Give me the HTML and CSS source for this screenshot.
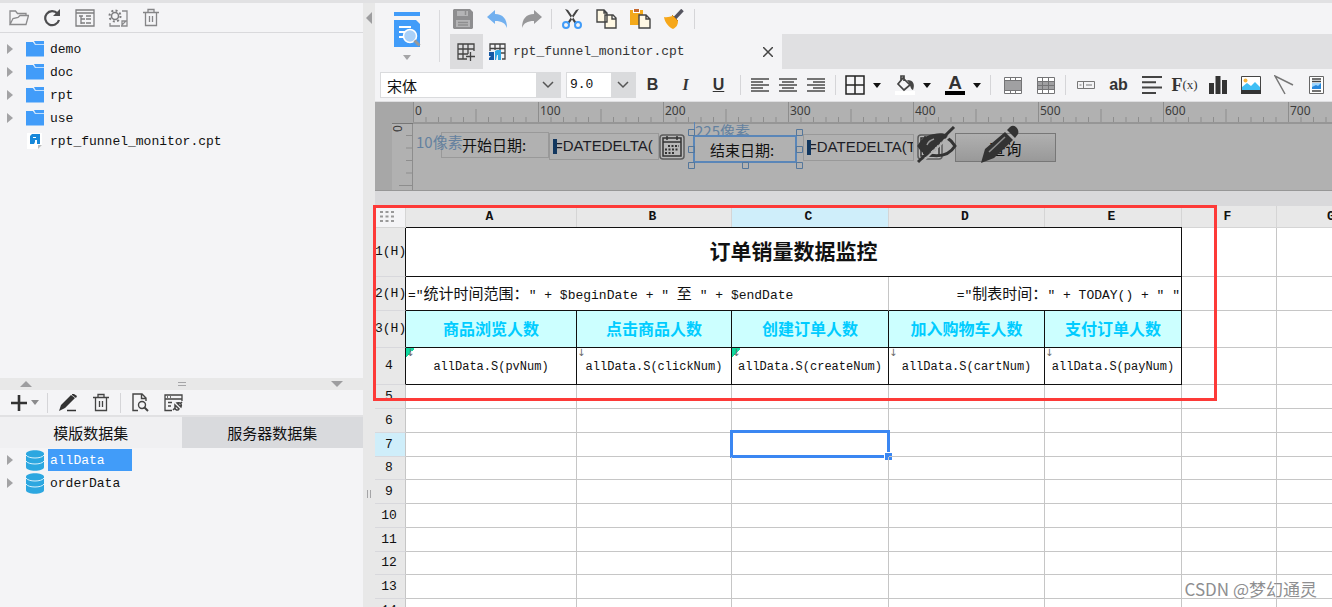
FILE: index.html
```html
<!DOCTYPE html>
<html lang="zh-CN">
<head>
<meta charset="utf-8">
<title>rpt_funnel_monitor.cpt</title>
<link rel="stylesheet" href="styles.css">
</head>
<body>
<svg class="defs" width="0" height="0" aria-hidden="true">
  <defs>
    <symbol id="folder" viewBox="0 0 18 16"><path fill="#419cf9" d="M0 1h7l2 3h9v11.500H0z"/><path fill="#419cf9" d="M8 0h10v3h-8.500z"/><path stroke="#bfdfff" fill="none" d="M7.500 1l2 2.500H18"/></symbol>
    <symbol id="db" viewBox="0 0 18 21"><path fill="#2ca7e0" d="M0 4c0-5 18-5 18 0v13c0 5-18 5-18 0z"/><path fill="none" stroke="#d8f1fc" d="M0 5c2 4 16 4 18 0M0 11c2 4 16 4 18 0"/></symbol>
    <symbol id="twist" viewBox="0 0 6 10"><path fill="#a3a3a5" d="M0 0l6 5-6 5z"/></symbol>
    <symbol id="down" viewBox="0 0 8 5"><path fill="currentColor" d="M0 0h8L4 5z"/></symbol>
    <symbol id="chev" viewBox="0 0 12 8"><path fill="none" stroke="#555" stroke-width="1.500" d="M1 1l5 5 5-5"/></symbol>
    <symbol id="trash" viewBox="0 0 18 20"><path fill="none" stroke="currentColor" stroke-width="1.300" d="M1 4.500h16M6 4V1.500h6V4M3.500 4.500v13h11v-13M7.500 8v6M10.500 8v6"/></symbol>
    <symbol id="cal" viewBox="0 0 26 26"><rect x="1" y="1" width="24" height="24" rx="3" fill="#b8b8b8" stroke="#5c5c5c" stroke-width="1.500"/><path fill="none" stroke="#333" stroke-width="1.500" d="M4 4h18v18H4zM4 8h18M8 2v4M18 2v4"/><path stroke="#333" stroke-width="2" stroke-dasharray="2 1.500" d="M9 12h11M6 15.500h14M6 19h10"/></symbol>
    <pattern id="ticks" width="125" height="22" patternUnits="userSpaceOnUse"><path stroke="#8d8d8d" fill="none" d="M.5 0v22M13 15v7M25.500 15v7M38 15v7M50.500 15v7M63 7v15M75.500 15v7M88 15v7M100.500 15v7M113 15v7"/></pattern>
  </defs>
</svg>
<div class="app">
  <aside class="side">
    <div class="bar bar--files">
      <button class="tool" aria-label="打开"><svg width="20" height="18" viewBox="0 0 20 18"><path fill="none" stroke="#8b8b8d" stroke-width="1.300" d="M1 15.500V2h5.500l2 2.500H17V7M1 15.500L4 9.500l5-1 2-2h8.500L17 15.500z"/></svg></button>
      <button class="tool" aria-label="刷新"><svg width="18" height="18" viewBox="0 0 18 18"><path fill="none" stroke="#4d4d4f" stroke-width="2.200" d="M14.500 4.500A7 7 0 1 0 16 11"/><path fill="#4d4d4f" d="M17 0v7h-7z"/></svg></button>
      <button class="tool" aria-label="结构"><svg width="20" height="18" viewBox="0 0 20 18"><path fill="none" stroke="#7d7d7f" stroke-width="1.300" d="M1 1h18v16H1zM1 4h18M4 7h4M6 7v8M6 10h4M6 14h4M11 7h5M11 10h5M11 14h5"/></svg></button>
      <button class="tool" aria-label="设置"><svg width="20" height="18" viewBox="0 0 20 18"><circle cx="7" cy="7" r="3.500" fill="none" stroke="#7d7d7f" stroke-width="1.500"/><circle cx="7" cy="7" r="5.500" fill="none" stroke="#7d7d7f" stroke-width="2" stroke-dasharray="2 2.300"/><path fill="none" stroke="#8b8b8d" stroke-width="1.300" d="M14 2h5v15h-6M2 14v3h10M14 12h4l-4 4z"/></svg></button>
      <button class="tool tool--grey" aria-label="删除"><svg width="18" height="20"><use href="#trash"/></svg></button>
    </div>
    <ul class="tree tree--files">
      <li><svg class="tw"><use href="#twist"/></svg><svg class="fo"><use href="#folder"/></svg><span>demo</span></li>
      <li><svg class="tw"><use href="#twist"/></svg><svg class="fo"><use href="#folder"/></svg><span>doc</span></li>
      <li><svg class="tw"><use href="#twist"/></svg><svg class="fo"><use href="#folder"/></svg><span>rpt</span></li>
      <li><svg class="tw"><use href="#twist"/></svg><svg class="fo"><use href="#folder"/></svg><span>use</span></li>
      <li><i class="tw"></i><svg class="fo" viewBox="0 0 18 16"><path fill="#fff" d="M1 0h15v12l-4 4H1z"/><path fill="#bbb" d="M12 12h4l-4 4z"/><path fill="#1687d9" d="M4 3l2-2h8v10h-3V7H9v2l-1 2H4z"/><path fill="#fff" d="M7 4h3v1H7z"/></svg><span>rpt_funnel_monitor.cpt</span></li>
    </ul>
    <div class="hsplit"><svg width="12" height="6" viewBox="0 0 12 6"><path fill="#9d9d9f" d="M0 6l6-6 6 6z"/></svg><svg width="8" height="4" viewBox="0 0 8 4"><path stroke="#a5a5a7" d="M0 .5h8M0 3.500h8"/></svg><svg width="12" height="6" viewBox="0 0 12 6"><path fill="#9d9d9f" d="M0 0h12L6 6z"/></svg></div>
    <section class="data">
      <div class="bar bar--data">
        <button class="tool tool--add" aria-label="新增"><svg width="18" height="18" viewBox="0 0 18 18"><path stroke="#333" stroke-width="2.600" d="M9 1v16M1 9h16"/></svg><svg class="dd"><use href="#down"/></svg></button>
        <i class="sep sep--tight"></i>
        <button class="tool" aria-label="编辑"><svg width="18" height="18" viewBox="0 0 18 18"><path fill="#333" d="M0 17l2-6L12 1l4 3L6 14zM13 0h2l3 2-1 2-4-3z"/><path stroke="#333" stroke-width="1.500" d="M8 16.500h9"/></svg></button>
        <button class="tool tool--dark" aria-label="删除"><svg width="18" height="20"><use href="#trash"/></svg></button>
        <i class="sep sep--tight"></i>
        <button class="tool" aria-label="预览"><svg width="17" height="19" viewBox="0 0 17 19"><path fill="none" stroke="#444" stroke-width="1.400" d="M6 17.500H1V1h9l4 4v3M9.500 1v4.500H14"/><circle cx="10" cy="12" r="3.500" fill="none" stroke="#444" stroke-width="1.400"/><path stroke="#444" stroke-width="2" d="M12 14l4 4"/></svg></button>
        <button class="tool" aria-label="连接"><svg width="19" height="18" viewBox="0 0 19 18"><path fill="none" stroke="#444" stroke-width="1.300" d="M8 16.500H1V1h17v6M1 5h17M3 3h1M6 3h1M4 8.500h4M4 12h3"/><path fill="none" stroke="#444" stroke-width="1.500" d="M9 16l2-2M11 11l4 4c-1 2-4 1-4-1zM13 9l4 4c1-2 0-5-4-4zM16 10l2-2"/></svg></button>
      </div>
      <div class="dtabs" role="tablist"><button role="tab" aria-selected="true" class="dtab dtab--on">模版数据集</button><button role="tab" aria-selected="false" class="dtab">服务器数据集</button></div>
      <ul class="tree tree--data">
        <li class="on"><svg class="tw"><use href="#twist"/></svg><svg class="dbi"><use href="#db"/></svg><span>allData</span></li>
        <li><svg class="tw"><use href="#twist"/></svg><svg class="dbi"><use href="#db"/></svg><span>orderData</span></li>
      </ul>
    </section>
  </aside>
  <div class="vsplit"><svg width="6" height="12" viewBox="0 0 6 12"><path fill="#9d9d9f" d="M6 0v12L0 6z"/></svg><svg width="4" height="8" viewBox="0 0 4 8"><path stroke="#a5a5a7" d="M.5 0v8M3.500 0v8"/></svg></div>
  <main class="main">
    <header class="head">
      <button class="preview" aria-label="预览"><svg width="28" height="36" viewBox="0 0 28 36"><path fill="#419cf9" d="M1 0h26v4H1zM1 8h22l4 4v23H1z"/><path stroke="#fff" stroke-width="2" d="M6 15h12M6 20h7M6 25h6"/><circle cx="17" cy="24" r="6.500" fill="#a9d0f8" stroke="#fff" stroke-width="1.500"/><path stroke="#999" stroke-width="3" d="M21.500 28.500l5 5"/></svg><svg class="dd"><use href="#down"/></svg></button>
      <i class="headsep"></i>
      <div class="headmain">
        <div class="quick">
          <button class="tool" aria-label="保存"><svg width="20" height="20" viewBox="0 0 20 20"><path fill="#8e8e90" d="M0 1l1-1h16l3 3v16l-1 1H1l-1-1z"/><path fill="#b4b4b6" d="M4 2h11v5H4zM3 11h14v7H3z"/><path stroke="#8e8e90" stroke-width="1.500" d="M12.500 2v4M5 13.500h10M5 16h10"/></svg></button>
          <button class="tool" aria-label="撤销"><svg width="21" height="18" viewBox="0 0 21 18"><path fill="#72b0ef" d="M0 7l8-7v4c8 0 12 5 12 14-2-5-5-7-12-7v3z"/></svg></button>
          <button class="tool" aria-label="重做"><svg width="21" height="18" viewBox="0 0 21 18"><path fill="#979799" d="M21 7l-8-7v4C5 4 1 9 1 18c2-5 5-7 12-7v3z"/></svg></button>
          <i class="sep sep--tight"></i>
          <button class="tool" aria-label="剪切"><svg width="20" height="20" viewBox="0 0 20 20"><path fill="#444" d="M3 0l3 1 9 13-2 1zM17 0l-3 1-9 13 2 1z"/><circle cx="4" cy="16" r="3" fill="none" stroke="#419cf9" stroke-width="2"/><circle cx="16" cy="16" r="3" fill="none" stroke="#419cf9" stroke-width="2"/></svg></button>
          <button class="tool" aria-label="复制"><svg width="21" height="20" viewBox="0 0 21 20"><path fill="#fff8e4" stroke="#444" stroke-width="1.400" d="M1 1h7l3 3v9H1zM9 6h8l3 3v10H9zM8 1v3h3M16 6v4h4"/></svg></button>
          <button class="tool" aria-label="粘贴"><svg width="21" height="20" viewBox="0 0 21 20"><path fill="#f3a91b" d="M0 1h13v15H0z"/><path fill="#fff" d="M3 0h7v4H3z"/><path fill="#c5682f" d="M4 0h5v3H4z"/><path fill="#fff8e4" stroke="#444" stroke-width="1.400" d="M9 6h7l4 4v9H9zM16 6v4h4"/></svg></button>
          <button class="tool" aria-label="格式刷"><svg width="20" height="20" viewBox="0 0 20 20"><path stroke="#555560" stroke-width="3.500" d="M18.500 1L11 9"/><path fill="#f6a71a" d="M0 8c4 1 6-1 9-1l5 5c0 3-1 6-5 8-4-2-8-6-9-12z"/><path stroke="#d08613" d="M8 6l6 6"/></svg></button>
          <i class="sep sep--tight"></i>
        </div>
        <nav class="tabs">
          <button class="newtab" aria-label="新建"><svg width="19" height="18" viewBox="0 0 19 18"><path fill="none" stroke="#444" stroke-width="1.300" d="M10 16H1V1h16v7M1 6h16M1 11h10M6 1v15M11 1v10M9 13.500h9M13.500 9v9"/></svg></button>
          <div class="tab"><svg width="17" height="17" viewBox="0 0 17 17"><path fill="none" stroke="#444" stroke-width="1.300" d="M1 8V1h15v15h-3M1 5.500h15M6 1v6M11 1v6M11 10h5"/><path fill="#1559a5" d="M0 9h5v8H0v-2l2-2H0z"/><path fill="#31a7e4" d="M6 8l2-1h4v10H9v-5H8l-1 5H6z"/></svg><span>rpt_funnel_monitor.cpt</span><button class="close" aria-label="关闭"><svg width="10" height="10" viewBox="0 0 10 10"><path stroke="#444" stroke-width="1.500" d="M0 0l10 10M10 0L0 10"/></svg></button></div>
        </nav>
      </div>
    </header>
    <div class="format">
      <label class="pick pick--font"><select aria-label="字体"><option>宋体</option></select><svg><use href="#chev"/></svg></label>
      <label class="pick pick--size"><select aria-label="字号"><option>9.0</option></select><svg><use href="#chev"/></svg></label>
      <button class="tool b">B</button><button class="tool i">I</button><button class="tool u">U</button>
      <i class="sep"></i>
      <button class="tool tool--al" aria-label="左对齐"><svg width="18" height="15" viewBox="0 0 18 15"><path stroke="#4a4a4a" stroke-width="1.500" d="M0 1h18M0 4h12M0 7h18M0 10h12M0 13h18"/></svg></button>
      <button class="tool tool--al" aria-label="居中"><svg width="18" height="15" viewBox="0 0 18 15"><path stroke="#4a4a4a" stroke-width="1.500" d="M0 1h18M3 4h12M0 7h18M3 10h12M0 13h18"/></svg></button>
      <button class="tool tool--al" aria-label="右对齐"><svg width="18" height="15" viewBox="0 0 18 15"><path stroke="#4a4a4a" stroke-width="1.500" d="M0 1h18M6 4h12M0 7h18M6 10h12M0 13h18"/></svg></button>
      <i class="sep"></i>
      <div class="combos">
        <button class="combo" aria-label="边框"><svg width="20" height="20" viewBox="0 0 20 20"><path fill="none" stroke="#222" stroke-width="1.500" d="M1 1h18v18H1zM10 1v18M1 10h18"/></svg><svg class="dd"><use href="#down"/></svg></button>
        <button class="combo" aria-label="填充"><svg width="20" height="20" viewBox="0 0 20 20"><path fill="#fff" d="M0 16h20v4H0z"/><path fill="none" stroke="#444" stroke-width="1.700" d="M8 3l7 7-6 5-6-6zM6 6V1h3v5"/><path fill="#444" d="M12 5c7 0 8 5 6 10-3-1-2-5-6-10z"/></svg><svg class="dd"><use href="#down"/></svg></button>
        <button class="combo combo--a" aria-label="字体颜色"><b>A</b><svg class="dd"><use href="#down"/></svg></button>
      </div>
      <i class="sep"></i>
      <button class="tool" aria-label="合并"><svg width="18" height="17" viewBox="0 0 18 17"><path fill="#fff" stroke="#747476" d="M.5.500h17v16H.5z"/><path fill="#a0a0a2" d="M1 3h16v11H1z"/><path stroke="#747476" fill="none" d="M0 3.500h18M0 13.500h18M6.500 0v3M11.500 0v3M6.500 14v3M11.500 14v3"/></svg></button>
      <button class="tool" aria-label="拆分"><svg width="18" height="17" viewBox="0 0 18 17"><path fill="#fff" stroke="#747476" d="M.5.500h17v16H.5z"/><path fill="#a0a0a2" d="M1 4h16v9H1z"/><path stroke="#747476" d="M0 4.500h18M0 8.500h18M0 12.500h18M5.500 0v17M11.500 0v17"/></svg></button>
      <i class="sep sep--tight"></i>
      <button class="tool" aria-label="单元格"><svg width="18" height="8" viewBox="0 0 18 8"><path fill="none" stroke="#777" d="M.5.500h17v7H.5zM6.500 1v6M2.500 4h2M9 4h6"/></svg></button>
      <button class="tool ab">ab</button>
      <button class="tool" aria-label="富文本"><svg width="20" height="18" viewBox="0 0 20 18"><path stroke="#444" stroke-width="2" d="M0 1h20M0 6.300h14M0 11.600h20M0 17h14"/></svg></button>
      <button class="tool fx">F<small>(x)</small></button>
      <button class="tool" aria-label="图表"><svg width="18" height="18" viewBox="0 0 18 18"><path fill="#333" d="M0 7h5v11H0zM6.500 0h5v18h-5zM13 4h5v14h-5z"/></svg></button>
      <button class="tool" aria-label="图片"><svg width="20" height="18" viewBox="0 0 20 18"><path fill="#fff" stroke="#444" d="M.5.500h19v17H.5z"/><circle cx="4.500" cy="4.500" r="2" fill="#f8b53c"/><path fill="#40bff5" d="M1 14V11l5-4 4 3 4-4 5 5v3z"/><path fill="#333" d="M0 14h20v4H0z"/></svg></button>
      <button class="tool" aria-label="斜线"><svg width="20" height="20" viewBox="0 0 20 20"><path fill="none" stroke="#777" stroke-width="1.500" d="M19 10L1 1l10 18"/></svg></button>
      <button class="tool" aria-label="子报表"><svg width="15" height="18" viewBox="0 0 15 18"><path fill="#fff" stroke="#666" d="M.5.500h14v17H.5z"/><path stroke="#444" stroke-width="1.300" d="M3 3h9M3 5.500h9M3 15h9"/><path fill="#2788dd" d="M3 7h9v6H3z"/><path fill="#9fd6ff" d="M3 7h9l-3 3-2-1-4 2z"/></svg></button>
    </div>
    <section class="designer">
      <svg class="hruler" width="100%" height="22"><rect width="100%" height="22" fill="url(#ticks)"/><g class="num"><text x="2" y="13">0</text><text x="127" y="13">100</text><text x="252" y="13">200</text><text x="377" y="13">300</text><text x="502" y="13">400</text><text x="627" y="13">500</text><text x="752" y="13">600</text><text x="877" y="13">700</text></g></svg>
      <svg class="vruler" width="21" height="66"><path stroke="#8d8d8d" d="M14 11.500h7M14 24h7M14 36.500h7M14 49h7M7 61.500h14"/><text class="num" transform="translate(10 8) rotate(-90)">0</text></svg>
      <div class="canvas">
        <div class="w w-lab"><span>开始日期:</span></div>
        <span class="w px px-1">10像素</span>
        <div class="w w-in w-in1"><i></i><span>=DATEDELTA(</span></div>
        <svg class="w cal1" width="26" height="26"><use href="#cal"/></svg>
        <span class="w px px-2">225像素</span>
        <div class="w w-sel"><span>结束日期:</span></div>
        <svg class="w hand" width="116" height="42" viewBox="0 0 116 42"><path fill="none" stroke="#55779b" d="M.5 1.500h6v6h-6zM108.500 1.500h6v6h-6zM.5 18.500h6v6h-6zM108.500 18.500h6v6h-6zM.5 34.500h6v6h-6zM54.500 34.500h6v6h-6zM108.500 34.500h6v6h-6z"/></svg>
        <div class="w w-in w-in2"><i></i><span>=DATEDELTA(T</span></div>
        <svg class="w cal2" width="26" height="26"><use href="#cal"/></svg>
        <button class="w w-btn">查询</button>
        <svg class="w eye" width="40" height="38" viewBox="0 0 40 38"><path fill="none" stroke="#333" stroke-width="3" d="M2 20C9 6 30 6 38 20 30 33 9 33 2 20z"/><path fill="#333" d="M3 20C8 7 24 5 31 9L10 29C6 27 4 24 3 20z"/><path fill="none" stroke="#999" stroke-width="1.500" d="M10 19c1-3 4-5 7-6"/><path stroke="#b1b1b1" stroke-width="2" d="M4 37L39 4"/><path stroke="#333" stroke-width="3" d="M1 36L37 1"/></svg>
        <svg class="w pen" width="38" height="38" viewBox="0 0 38 38"><path fill="#333" d="M0 38l4-14L24 7l8 8-19 18zM26 5l3-3c4-4 10 2 8 7l-3 4z"/><path stroke="#8f8f8f" stroke-width="1.500" d="M8 27L24 12"/></svg>
      </div>
    </section>
    <section class="sheet">
      <div class="clip">
      <table>
        <colgroup><col class="c0"><col class="cA"><col class="cB"><col class="cC"><col class="cD"><col class="cE"><col class="cF"><col class="cG"></colgroup>
        <thead><tr><th class="corner"><svg width="14" height="11" viewBox="0 0 14 11"><path stroke="#999" stroke-width="2" stroke-dasharray="3 2.500" d="M0 1h14M0 5.500h14M0 10h14"/></svg></th><th>A</th><th>B</th><th class="hot">C</th><th>D</th><th>E</th><th>F</th><th>G</th></tr></thead>
        <tbody>
          <tr class="r1"><th>1(H)</th><td colspan="5" class="k title">订单销量数据监控</td><td></td><td></td></tr>
          <tr class="r2"><th>2(H)</th><td colspan="3" class="kb expr">="<b>统计时间范围：</b>" + $beginDate + " <b>至</b> " + $endDate</td><td colspan="2" class="k expr right">="<b>制表时间：</b>" + TODAY() + " "</td><td></td><td></td></tr>
          <tr class="r3"><th>3(H)</th><td class="k hd">商品浏览人数</td><td class="k hd">点击商品人数</td><td class="k hd">创建订单人数</td><td class="k hd">加入购物车人数</td><td class="k hd">支付订单人数</td><td></td><td></td></tr>
          <tr class="r3"><th>4</th><td class="k v g">allData.S(pvNum)</td><td class="k v">allData.S(clickNum)</td><td class="k v g">allData.S(createNum)</td><td class="k v">allData.S(cartNum)</td><td class="k v">allData.S(payNum)</td><td></td><td></td></tr>
          <tr><th>5</th><td></td><td></td><td></td><td></td><td></td><td></td><td></td></tr>
          <tr><th>6</th><td></td><td></td><td></td><td></td><td></td><td></td><td></td></tr>
          <tr><th class="hot">7</th><td></td><td></td><td class="sel"><i></i></td><td></td><td></td><td></td><td></td></tr>
          <tr class="s"><th>8</th><td></td><td></td><td></td><td></td><td></td><td></td><td></td></tr>
          <tr><th>9</th><td></td><td></td><td></td><td></td><td></td><td></td><td></td></tr>
          <tr><th>10</th><td></td><td></td><td></td><td></td><td></td><td></td><td></td></tr>
          <tr><th>11</th><td></td><td></td><td></td><td></td><td></td><td></td><td></td></tr>
          <tr class="s"><th>12</th><td></td><td></td><td></td><td></td><td></td><td></td><td></td></tr>
          <tr><th>13</th><td></td><td></td><td></td><td></td><td></td><td></td><td></td></tr>
          <tr><th>14</th><td></td><td></td><td></td><td></td><td></td><td></td><td></td></tr>
        </tbody>
      </table>
      </div>
      <div class="redbox"></div>
    </section>
    <div class="mark">CSDN @梦幻通灵</div>
  </main>
</div>
</body>
</html>
```
FILE: styles.css
```css
* { box-sizing: border-box; }
body { margin: 0; font: 13px/16px "Liberation Mono", "Noto Sans CJK SC", monospace; color: #111; background: #f4f4f6; }
button { border: 0; padding: 0; margin: 0; background: none; color: inherit; font: inherit; }
ul { list-style: none; margin: 0; padding: 0; }
svg { flex: none; display: block; }
.defs { position: absolute; }
.app { display: flex; height: 100vh; border-top: 3px solid #e1e1e3; overflow: hidden; }

/* left side */
.side { flex: none; width: 363px; display: flex; flex-direction: column; background: #f4f4f6; }
.bar { display: flex; align-items: center; flex: none; }
.bar--files { height: 30px; padding-left: 2px; border-bottom: 1px solid #d9d9dc; }
.bar--data { height: 27px; padding-left: 8px; border-bottom: 2px solid #e1e1e3; }
.tool { width: 33px; height: 100%; display: flex; align-items: center; justify-content: center; flex: none; }
.tool--grey { color: #858587; }
.tool--dark { color: #444; }
.tool--add { width: 36px; gap: 3px; justify-content: flex-start; padding-left: 2px; }
.tool--add .dd { color: #8b8b8d; }
.tool--al { width: 28px; }
.sep { flex: none; width: 1px; height: 20px; margin: 0 5px; background: #d5d5d8; }
.sep--tight { margin: 0 3px; }
.dd { width: 8px; height: 5px; }
.tree { display: grid; gap: 1px; }
.tree li { display: flex; align-items: center; height: 22px; padding-left: 7px; }
.tree span { padding: 2px 2px 0; height: 22px; line-height: 20px; }
.tree--files { flex: 1; align-content: start; padding-top: 5px; }
.tree--data { padding-top: 1px; }
.tw { width: 6px; height: 10px; margin-right: 13px; }
.fo { width: 18px; height: 16px; margin-right: 4px; }
.dbi { width: 18px; height: 21px; margin-right: 4px; }
.on span { background: #419cf9; color: #fff; width: 84px; }
.hsplit { flex: none; height: 12px; background: #e8e8e8; display: flex; align-items: center; justify-content: space-between; padding: 0 20px; }
.data { flex: none; height: 217px; }
.dtabs { display: flex; height: 31px; }
.dtab { flex: 1; background: #d9dadd; font: 15px/30px "Noto Sans CJK SC", sans-serif; }
.dtab--on { background: #f0f0f2; }
.vsplit { flex: none; width: 12px; background: #e8e8e8; display: flex; flex-direction: column; justify-content: space-between; align-items: center; padding: 9px 0 109px; }

/* head */
.main { flex: 1; min-width: 0; display: flex; flex-direction: column; position: relative; background: #d9d9db; }
.head { display: flex; flex: none; background: #f4f4f6; }
.preview { width: 64px; display: flex; flex-direction: column; align-items: center; padding-top: 9px; gap: 7px; color: #a5a5a7; }
.headsep { width: 1px; margin: 7px 0; background: #dadadd; }
.headmain { flex: 1; min-width: 0; }
.quick { display: flex; align-items: center; height: 31px; padding-left: 6px; }
.quick .tool { width: 34px; }
.tabs { display: flex; height: 35px; background: #e0e0e2; margin-left: 10px; }
.newtab { width: 33px; background: #dcdcde; display: flex; align-items: center; justify-content: center; }
.tab { width: 299px; background: #f4f4f6; display: flex; align-items: center; padding: 0 8px 0 6px; gap: 7px; color: #333; }
.tab span { flex: 1; }
.close { padding: 1px; }

/* format bar */
.format { flex: none; display: flex; align-items: center; height: 33px; padding-left: 5px; background: #f4f4f6; border-bottom: 1px solid #dedee0; overflow: hidden; }
.pick { display: flex; align-items: center; position: relative; height: 26px; flex: none; }
.pick select { appearance: none; width: 100%; height: 26px; border: 1px solid #dadbdd; border-radius: 0; padding: 0 3px; background: linear-gradient(to left, #dadbdd 24px, #fff 24px); font: inherit; color: #111; }
.pick svg { position: absolute; right: 7px; width: 12px; height: 8px; pointer-events: none; }
.pick--font { width: 181px; margin-right: 5px; }
.pick--font select { padding-left: 6px; font: 15px "Noto Sans CJK SC", sans-serif; }
.pick--size { width: 70px; }
.b, .i, .u, .ab { font: bold 16px/20px "Liberation Sans", sans-serif; color: #333; }
.i { font-family: "Liberation Serif", serif; font-style: italic; }
.u { text-decoration: underline; }
.fx { font: bold 18px/20px "Liberation Serif", serif; color: #333; }
.fx small { font-size: 13px; font-weight: normal; }
.combos { display: flex; gap: 6px; }
.combo { width: 44px; display: flex; align-items: center; }
.combo > :first-child { margin: 0 4px; width: 20px; height: 20px; }
.combo .dd { margin-left: 4px; }
.combo--a b { font: bold 19px/16px "Liberation Sans", sans-serif; color: #333; border-bottom: 4px solid #000; }

/* form designer */
.designer { flex: none; display: grid; grid-template-columns: 17px 21px 1fr; grid-template-rows: 22px 66px; background: #b1b1b1; border-bottom: 1px solid #979797; overflow: hidden; }
.designer::before { content: ""; grid-area: 1 / 1 / 3 / 2; background: #a7a7a7; }
.designer::after { content: ""; grid-area: 1 / 2; background: #a7a7a7; border-bottom: 1px solid #777; }
.hruler { grid-area: 1 / 3; border-bottom: 2px solid #969696; }
.vruler { grid-area: 2 / 2; border-right: 1px solid #8d8d8d; }
.num { font: 12px "Noto Sans", sans-serif; fill: #3c3c3c; }
.canvas { grid-area: 2 / 3; position: relative; }
.w { position: absolute; }
.w-lab { left: 28px; top: 8px; width: 108px; height: 26px; border: 1px solid #999; padding-left: 20px; font: 15px/24px "Noto Sans CJK SC", sans-serif; }
.px { font: 15px/18px "Noto Sans CJK SC", sans-serif; color: #64819f; }
.px-1 { left: 3px; top: 9px; }
.px-2 { left: 281px; top: -2px; border-left: 1px solid #5a86b8; }
.w-in { height: 27px; border: 1px solid #999; padding-left: 4px; overflow: hidden; font: 15px/24px "Liberation Sans", sans-serif; white-space: nowrap; color: #1d1d26; }
.w-in i { position: absolute; left: 3px; top: 5px; width: 4px; height: 15px; background: #12375f; }
.w-in1 { left: 136px; top: 9px; width: 110px; }
.w-in2 { left: 390px; top: 10px; width: 111px; }
.cal1 { left: 246px; top: 10px; }
.cal2 { left: 504px; top: 10px; }
.w-sel { left: 280px; top: 11px; width: 104px; height: 28px; border: 2px solid #5a86b8; background: #b1b1b1; padding-left: 15px; font: 15px/26px "Noto Sans CJK SC", sans-serif; }
.hand { left: 275px; top: 4px; }
.w-btn { left: 542px; top: 9px; width: 101px; height: 29px; border: 1px solid #777; background: linear-gradient(#b0b0b0, #999); font: 16px/26px "Noto Sans CJK SC", sans-serif; }
.eye { left: 504px; top: 2px; }
.pen { left: 568px; top: 1px; }

/* spreadsheet */
.sheet { flex: 1; min-height: 0; margin-top: 15px; position: relative; background: #fff; }
.clip { height: 100%; overflow: hidden; }
table { table-layout: fixed; width: 1014px; border-spacing: 0; }
.c0 { width: 31px; } .cA { width: 171px; } .cB { width: 155px; } .cC { width: 157px; } .cD { width: 156px; } .cE { width: 137px; } .cF { width: 95px; } .cG { width: 112px; }
th, td { padding: 0; height: 24px; border: 0 solid #c6c6c6; border-width: 0 1px 1px 0; white-space: nowrap; text-align: center; position: relative; }
th { background: #e8e8e8; font-weight: normal; border-bottom-color: #d8d8dc; }
thead th { height: 22px; font-weight: bold; border-color: #d5d5d5; padding-right: 3px; }
th.corner { background: #f4f4f6; }
.corner svg { margin-left: 5px; }
th.hot { background: #cfeefa; }
tbody th { border-right-color: #c6c6c6; padding-right: 2px; }
.r1 > * { height: 49px; }
.r2 > * { height: 34px; }
.r3 > * { height: 37px; }
.s > * { height: 23px; }
.k { border-color: #111; }
.kb { border-bottom-color: #111; }
.r1 th, .r2 th, .r3 th { border-right-color: #111; }
.title { box-shadow: 0 -1px #111; font: bold 21px/30px "Noto Sans CJK SC", sans-serif; padding-bottom: 4px; }
.expr { text-align: left; padding-left: 2px; }
.expr b { font: 15px/20px "Noto Sans CJK SC", sans-serif; }
.right { text-align: right; padding-right: 1px; }
.hd { background: #ccffff; color: #00ccff; font: bold 16px/24px "Noto Sans CJK SC", sans-serif; padding-bottom: 2px; }
.v { font-size: 12px; padding-top: 2px; }
.v::before { content: "↓"; position: absolute; left: 0; top: 0; width: 8px; font: 10px/10px "DejaVu Sans", sans-serif; color: #666; }
.g::before { background: linear-gradient(135deg, #10d9a0 50%, transparent 50%); }
.sel i { position: absolute; inset: -3px -2px -2px; border: 3px solid #3b87f2; }
.sel i::after { content: ""; position: absolute; right: -5px; bottom: -5px; width: 7px; height: 7px; background: #3b87f2; border: 1px solid #fff; border-width: 1px 0 0 1px; }
.redbox { position: absolute; left: -2px; top: -1px; width: 844px; height: 196px; border: 3px solid #fd3a38; }
.mark { position: absolute; right: 15px; bottom: 6px; font: 17px/24px "Noto Sans CJK SC", sans-serif; color: #8e8e90; text-shadow: 0 0 1px #fff; }
```
